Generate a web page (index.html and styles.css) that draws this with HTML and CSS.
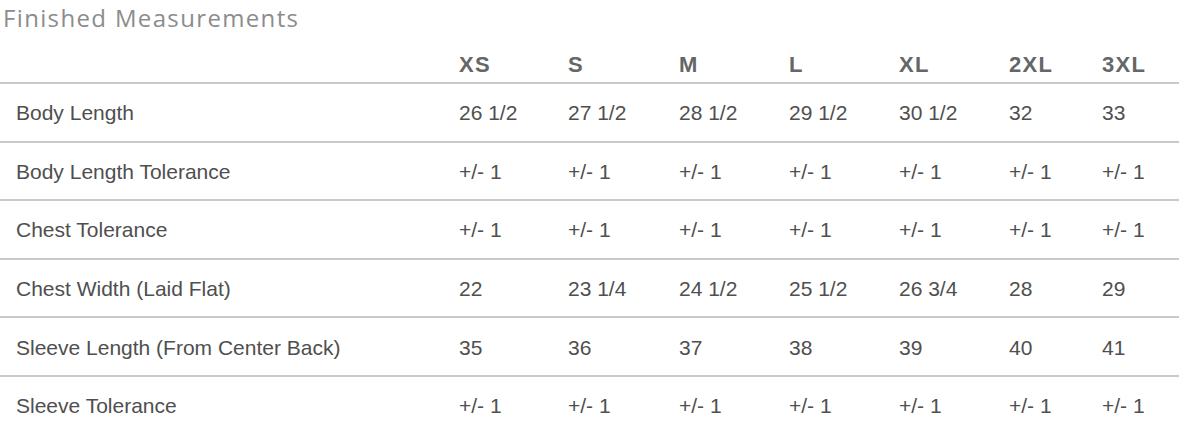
FILE: index.html
```html
<!DOCTYPE html>
<html lang="en">
<head>
<meta charset="utf-8">
<title>Finished Measurements</title>
<link rel="stylesheet" href="styles.css">
</head>
<body>
<h2 class="title">Finished Measurements</h2>
<table class="sizes">
  <colgroup>
    <col class="c-label">
    <col class="c-1"><col class="c-2"><col class="c-3"><col class="c-4"><col class="c-5"><col class="c-6"><col class="c-7">
  </colgroup>
  <thead>
    <tr><th></th><th>XS</th><th>S</th><th>M</th><th>L</th><th>XL</th><th>2XL</th><th>3XL</th></tr>
  </thead>
  <tbody>
    <tr><td>Body Length</td><td>26 1/2</td><td>27 1/2</td><td>28 1/2</td><td>29 1/2</td><td>30 1/2</td><td>32</td><td>33</td></tr>
    <tr><td>Body Length Tolerance</td><td>+/- 1</td><td>+/- 1</td><td>+/- 1</td><td>+/- 1</td><td>+/- 1</td><td>+/- 1</td><td>+/- 1</td></tr>
    <tr><td>Chest Tolerance</td><td>+/- 1</td><td>+/- 1</td><td>+/- 1</td><td>+/- 1</td><td>+/- 1</td><td>+/- 1</td><td>+/- 1</td></tr>
    <tr><td>Chest Width (Laid Flat)</td><td>22</td><td>23 1/4</td><td>24 1/2</td><td>25 1/2</td><td>26 3/4</td><td>28</td><td>29</td></tr>
    <tr><td>Sleeve Length (From Center Back)</td><td>35</td><td>36</td><td>37</td><td>38</td><td>39</td><td>40</td><td>41</td></tr>
    <tr><td>Sleeve Tolerance</td><td>+/- 1</td><td>+/- 1</td><td>+/- 1</td><td>+/- 1</td><td>+/- 1</td><td>+/- 1</td><td>+/- 1</td></tr>
  </tbody>
</table>
</body>
</html>
```
FILE: styles.css
```css
html, body {
  margin: 0;
  padding: 0;
  background: #ffffff;
}

.title {
  margin: 0;
  padding-left: 3px;
  font-family: "Open Sans", "Liberation Sans", sans-serif;
  font-weight: 400;
  font-size: 24px;
  line-height: 36px;
  letter-spacing: 1.35px;
  color: #8c8c8c;
}

.sizes {
  width: 1179px;
  border-collapse: collapse;
  table-layout: fixed;
  font-family: "Liberation Sans", Arial, sans-serif;
}

.c-label { width: 443px; }
.c-1 { width: 109px; }
.c-2 { width: 111px; }
.c-3 { width: 110px; }
.c-4 { width: 110px; }
.c-5 { width: 110px; }
.c-6 { width: 93px; }
.c-7 { width: 93px; }

.sizes th {
  height: 47px;
  box-sizing: border-box;
  padding: 0 0 5px 16px;
  vertical-align: bottom;
  text-align: left;
  font-weight: bold;
  font-size: 22px;
  line-height: 24px;
  letter-spacing: 1.3px;
  color: #666666;
  border-bottom: 2px solid #c9c9c9;
}

.sizes td {
  height: 54.6px;
  padding: 2px 0 0 16px;
  vertical-align: middle;
  text-align: left;
  font-size: 21px;
  line-height: 24px;
  color: #4f4f4f;
  white-space: nowrap;
  border-bottom: 2px solid #c9c9c9;
}

.sizes tbody tr:last-child td {
  border-bottom: none;
}
```
